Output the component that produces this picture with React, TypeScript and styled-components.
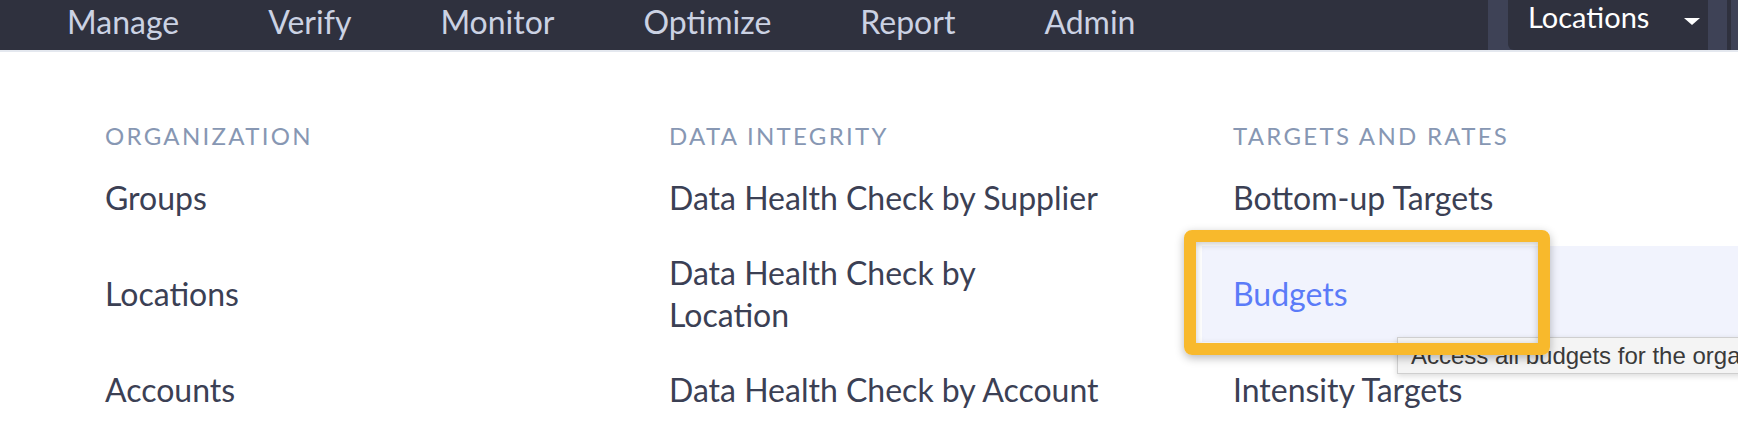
import React from "react";
import styled, { createGlobalStyle } from "styled-components";

const GlobalStyle = createGlobalStyle`
  html, body {
    margin: 0;
    padding: 0;
    background: #fff;
    overflow: hidden;
  }
  body {
    font-family: Lato, "Open Sans", sans-serif;
  }
`;

const Page = styled.div`
  width: 1738px;
  height: 430px;
  overflow: hidden;
  background: #fff;
`;

const TopBar = styled.header`
  display: flex;
  align-items: flex-start;
  height: 50px;
  background: #2f313e;
  border-bottom: 2px solid #e4e8ef;
`;

const NavList = styled.nav`
  display: flex;
  gap: 89px;
  padding-left: 67px;
`;

const NavItem = styled.a`
  font-size: 32px;
  line-height: 43px;
  color: #cbd2e3;
  text-decoration: none;
  cursor: pointer;
`;

const RightArea = styled.div`
  display: flex;
  margin-left: auto;
  height: 50px;
  padding-left: 20px;
  background: #3e4256;
`;

const Dropdown = styled.button`
  display: flex;
  justify-content: space-between;
  align-items: flex-start;
  width: 200px;
  height: 50px;
  padding: 0 8px 0 20px;
  border: none;
  border-bottom-left-radius: 6px;
  background: #2f313e;
  color: #fff;
  font-family: Lato, "Open Sans", sans-serif;
  font-size: 29px;
  line-height: 34px;
  cursor: pointer;
`;

const Caret = styled.span`
  margin-top: 18px;
  width: 0;
  height: 0;
  border-left: 8.5px solid transparent;
  border-right: 8.5px solid transparent;
  border-top: 7px solid #fff;
`;

const Gutter = styled.div`
  width: 19px;
`;

const Divider = styled.div`
  width: 4px;
  margin-right: 7px;
  background: #2f313e;
`;

const Menu = styled.div`
  display: grid;
  grid-template-columns: repeat(3, 564px);
  padding: 72px 0 0 74px;
`;

const Column = styled.section`
  display: flex;
  flex-direction: column;
`;

const Heading = styled.h3`
  margin: 0 0 2px;
  padding-left: 31px;
  font-size: 24px;
  line-height: 24px;
  font-weight: 400;
  letter-spacing: 2.3px;
  text-transform: uppercase;
  color: #8797b3;
`;

const Item = styled.a<{ $active?: boolean }>`
  position: relative;
  display: flex;
  align-items: center;
  height: 96px;
  padding-left: 31px;
  font-size: 32px;
  line-height: 42px;
  text-decoration: none;
  color: ${(p) => (p.$active ? "#5b7bf8" : "#3b4054")};
  background: ${(p) => (p.$active ? "#f1f3fd" : "transparent")};
  cursor: pointer;
`;

const Highlight = styled.div`
  position: absolute;
  left: -18px;
  top: -16px;
  width: 366px;
  height: 125px;
  box-sizing: border-box;
  border: 12px solid #f8b92c;
  border-radius: 8px;
  box-shadow: 0 3px 10px rgba(0, 0, 0, 0.28), inset 0 2px 7px rgba(0, 0, 0, 0.22);
  z-index: 2;
  pointer-events: none;
`;

const Tooltip = styled.div`
  position: absolute;
  left: 195px;
  top: 91px;
  height: 35px;
  padding: 0 14px 0 13px;
  border: 1px solid #cfcfcf;
  background: #f4f4f4;
  box-shadow: 0 2px 6px rgba(0, 0, 0, 0.15);
  font-family: "Liberation Sans", Arial, sans-serif;
  font-size: 24px;
  line-height: 35px;
  color: #3a3a3a;
  white-space: nowrap;
  z-index: 1;
`;

type Link = { label: string; active?: boolean; tip?: string };

const columns: { title: string; links: Link[] }[] = [
  {
    title: "Organization",
    links: [{ label: "Groups" }, { label: "Locations" }, { label: "Accounts" }],
  },
  {
    title: "Data Integrity",
    links: [
      { label: "Data Health Check by Supplier" },
      { label: "Data Health Check by\nLocation" },
      { label: "Data Health Check by Account" },
    ],
  },
  {
    title: "Targets and Rates",
    links: [
      { label: "Bottom-up Targets" },
      {
        label: "Budgets",
        active: true,
        tip: "Access all budgets for the organization",
      },
      { label: "Intensity Targets" },
    ],
  },
];

const navLinks = ["Manage", "Verify", "Monitor", "Optimize", "Report", "Admin"];

const App = () => {
  return (
    <Page>
      <GlobalStyle />
      <TopBar>
        <NavList>
          {navLinks.map((n) => (
            <NavItem key={n}>{n}</NavItem>
          ))}
        </NavList>
        <RightArea>
          <Dropdown>
            Locations
            <Caret />
          </Dropdown>
          <Gutter />
          <Divider />
        </RightArea>
      </TopBar>
      <Menu>
        {columns.map((col) => (
          <Column key={col.title}>
            <Heading>{col.title}</Heading>
            {col.links.map((link) => (
              <Item key={link.label} $active={link.active}>
                <span>
                  {link.label.split("\n").map((line, i) => (
                    <React.Fragment key={i}>
                      {i > 0 && <br />}
                      {line}
                    </React.Fragment>
                  ))}
                </span>
                {link.active && <Highlight />}
                {link.tip && <Tooltip>{link.tip}</Tooltip>}
              </Item>
            ))}
          </Column>
        ))}
      </Menu>
    </Page>
  );
};

export default App;
